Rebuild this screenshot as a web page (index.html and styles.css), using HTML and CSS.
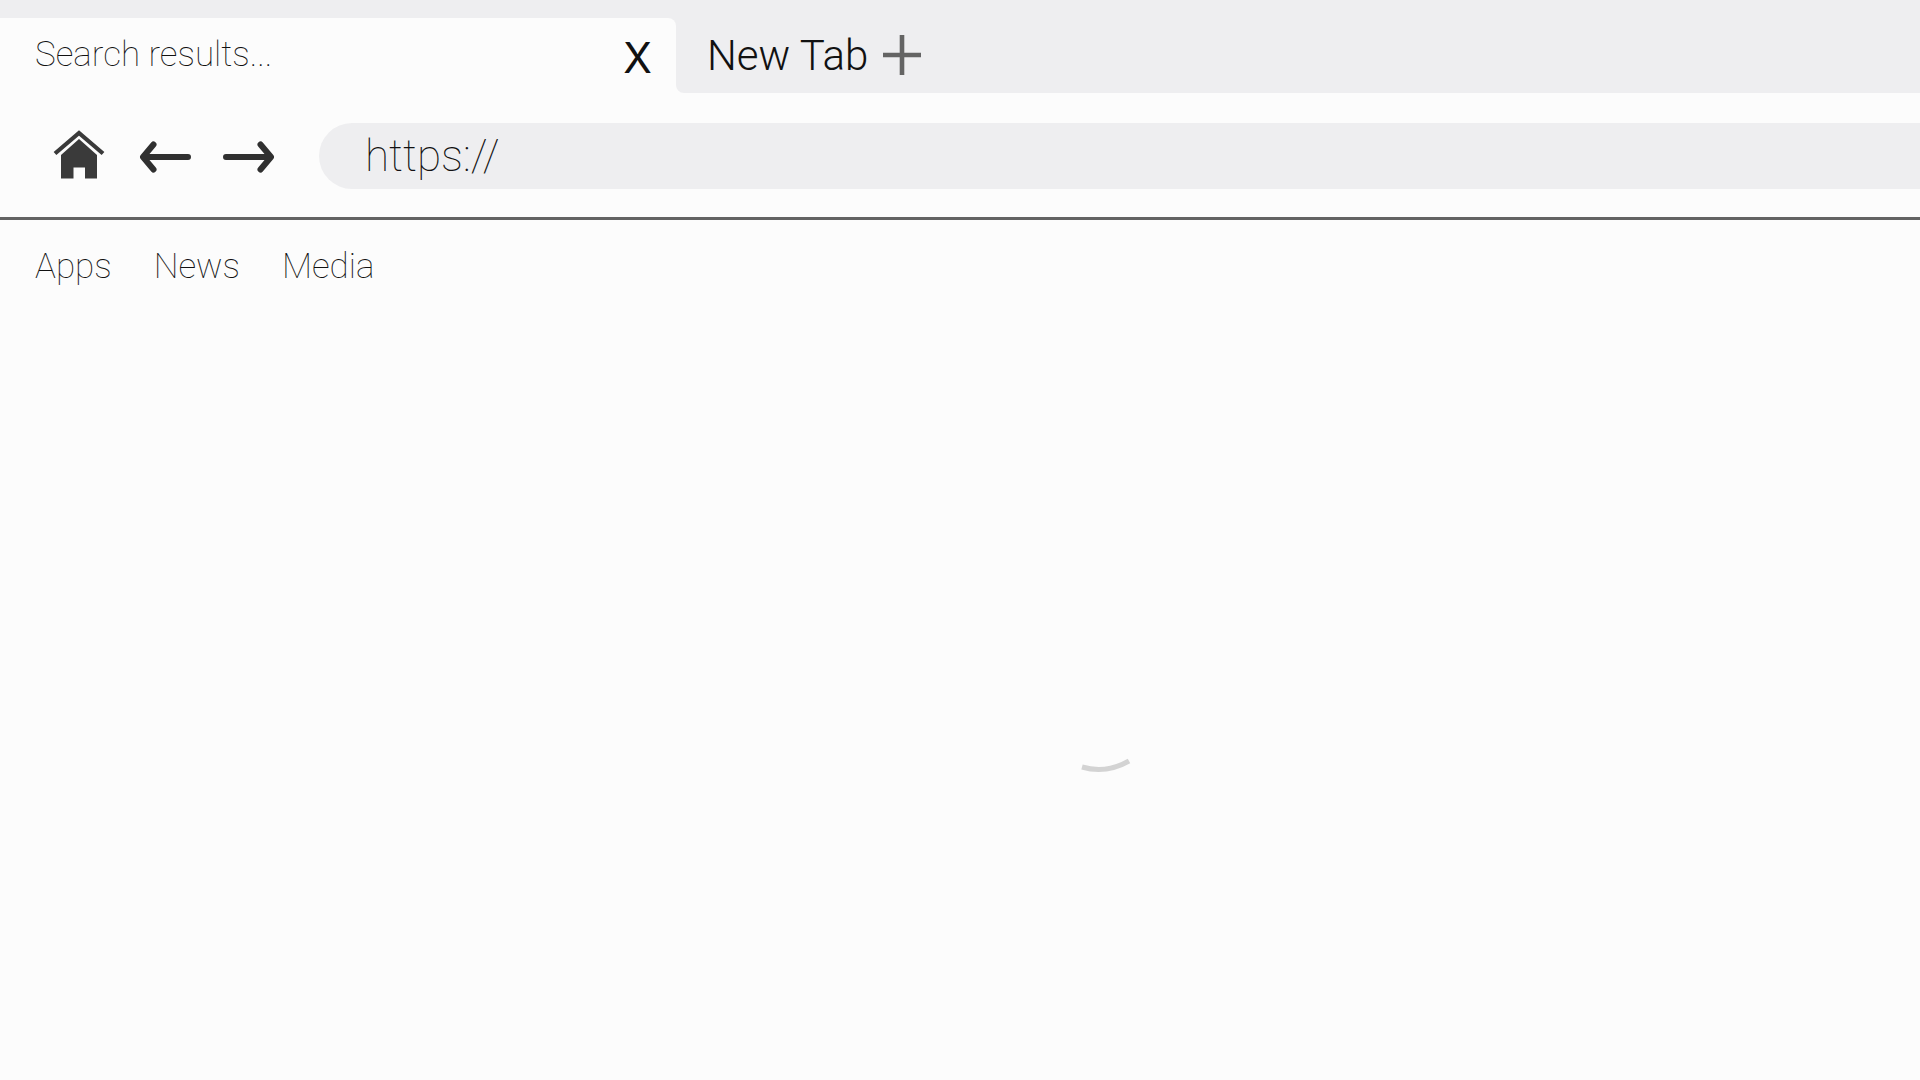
FILE: index.html
```html
<!DOCTYPE html>
<html lang="en">
<head>
    <meta charset="UTF-8">
    <meta name="viewport" content="width=device-width, initial-scale=1.0">
    <title>Search results...</title>
    <link rel="stylesheet" href="styles.css">
</head>
<body>
    <header class="tabs">
        <div class="tab">
            <span class="tab-title">Search results...</span>
            <button class="close" aria-label="Close tab">X</button>
        </div>
        <div class="strip">
            <button class="new-tab">
                New Tab
                <svg width="38" height="42" viewBox="0 0 38 42" aria-hidden="true">
                    <path d="M0 20H38M19 0V40" stroke="#646464" stroke-width="4.6"/>
                </svg>
            </button>
        </div>
    </header>

    <div class="toolbar">
        <nav class="controls">
            <button aria-label="Home">
                <svg width="54" height="52" viewBox="0 0 54 52" aria-hidden="true">
                    <path d="M2 23.500L26 3L50 23.500" fill="none" stroke="#3a3a3a" stroke-width="4.200"/>
                    <path d="M26 9L44 25V48.500H32V37.500H20.500V48.500H8V25Z" fill="#3a3a3a"/>
                </svg>
            </button>
            <button aria-label="Back">
                <svg class="arrow" width="52" height="34" viewBox="0 0 52 34" aria-hidden="true">
                    <path d="M49 18H5M14.500 5.500L4 18L14.500 30.500"/>
                </svg>
            </button>
            <button aria-label="Forward">
                <svg class="arrow" width="52" height="34" viewBox="0 0 52 34" aria-hidden="true">
                    <path d="M3 18H47M37.500 5.500L48 18L37.500 30.500"/>
                </svg>
            </button>
        </nav>
        <input class="address" type="text" value="https://" aria-label="Address">
    </div>

    <nav class="bookmarks">
        <a href="#">Apps</a>
        <a href="#">News</a>
        <a href="#">Media</a>
    </nav>

    <main class="page">
        <svg class="spinner" width="102" height="102" viewBox="0 0 102 102" role="img" aria-label="Loading">
            <path d="M34 96Q58 103 81 90" fill="none" stroke="#d3d3d3" stroke-width="5"/>
        </svg>
    </main>
</body>
</html>
```
FILE: styles.css
```css
* {
    box-sizing: border-box;
}
body {
    font-family: Roboto, sans-serif;
    font-weight: 100;
    margin: 0;
    min-height: 100vh;
    display: flex;
    flex-direction: column;
    background-color: #fcfcfc;
    color: #111;
}
button {
    display: flex;
    align-items: center;
    padding: 0;
    border: none;
    background: none;
    color: inherit;
    font-family: inherit;
    cursor: pointer;
}
/* grey behind the tab's top corner, page colour behind the strip's bottom one */
.tabs {
    display: flex;
    padding-top: 18px;
    background: linear-gradient(#eeeef0 50%, #fcfcfc 50%);
}
.tab {
    display: flex;
    justify-content: space-between;
    align-items: center;
    width: 676px;
    height: 75px;
    padding: 0 24px 0 35px;
    background-color: #fcfcfc;
    border-radius: 0 8px 0 0;
}
.tab-title {
    padding-bottom: 2px;
    font-size: 35px;
}
.close {
    padding-top: 4px;
    font-family: Inter, sans-serif;
    font-size: 42px;
    font-weight: 400;
}
.strip {
    flex: 1;
    display: flex;
    padding-left: 31px;
    background-color: #eeeef0;
    border-radius: 0 0 0 8px;
}
.new-tab {
    gap: 15px;
    font-size: 42px;
    font-weight: 300;
}
.toolbar {
    display: flex;
    align-items: center;
    gap: 44px;
    padding: 30px 0 28px 53px;
    border-bottom: 3px solid #636363;
}
.controls {
    display: flex;
    align-items: center;
    gap: 32px;
}
.arrow {
    fill: none;
    stroke: #303030;
    stroke-width: 6;
    stroke-linecap: round;
    stroke-linejoin: round;
}
.address {
    flex: 1;
    height: 66px;
    padding: 0 46px;
    border: none;
    border-radius: 33px 0 0 33px;
    background-color: #eeeef0;
    color: inherit;
    font-family: inherit;
    font-size: 44px;
    font-weight: 100;
}
.bookmarks {
    display: flex;
    gap: 42px;
    padding: 26px 35px;
}
.bookmarks a {
    color: inherit;
    font-size: 35px;
    text-decoration: none;
}
.page {
    flex: 1;
    display: grid;
    place-items: center;
    padding: 50px 0 0 278px;
}
```
